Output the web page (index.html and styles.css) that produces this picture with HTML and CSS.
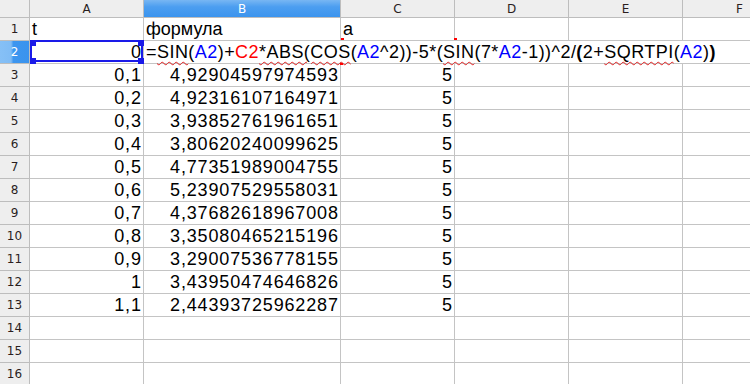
FILE: index.html
```html
<!DOCTYPE html>
<html>
<head>
<meta charset="utf-8">
<link rel="stylesheet" href="styles.css">
</head>
<body>
<div class="sheet">
  <div class="corner"></div>
  <div class="ch">A</div><div class="ch sel">B</div><div class="ch">C</div><div class="ch">D</div><div class="ch">E</div><div class="ch">F</div>

  <div class="rh">1</div><div class="c">t</div><div class="c">формула</div><div class="c">a</div><div class="c"></div><div class="c"></div><div class="c"></div>

  <div class="rh rsel">2</div>
  <div class="c r ref">0<span class="refbox"></span><span class="h tl"></span><span class="h tr"></span><span class="h bl"></span><span class="h br"></span></div>
  <div class="edit"><span class="formula">=<span class="sp">SIN</span>(<span class="rb">A2</span>)+<span class="rr">C2</span><span class="sp">*ABS(COS</span>(<span class="rb">A2</span>^2))-5*(<span class="sp">SIN</span>(7*<span class="rb">A2</span>-1))^2/<b>(</b>2+<span class="sp">SQRTPI</span>(<span class="rb">A2</span>)<b>)</b></span><span class="mk m1"></span><span class="mk m2"></span><span class="mk m3"></span></div>

  <div class="rh">3</div><div class="c r">0,1</div><div class="c r">4,92904597974593</div><div class="c r">5</div><div class="c"></div><div class="c"></div><div class="c"></div>
  <div class="rh">4</div><div class="c r">0,2</div><div class="c r">4,92316107164971</div><div class="c r">5</div><div class="c"></div><div class="c"></div><div class="c"></div>
  <div class="rh">5</div><div class="c r">0,3</div><div class="c r">3,93852761961651</div><div class="c r">5</div><div class="c"></div><div class="c"></div><div class="c"></div>
  <div class="rh">6</div><div class="c r">0,4</div><div class="c r">3,80620240099625</div><div class="c r">5</div><div class="c"></div><div class="c"></div><div class="c"></div>
  <div class="rh">7</div><div class="c r">0,5</div><div class="c r">4,77351989004755</div><div class="c r">5</div><div class="c"></div><div class="c"></div><div class="c"></div>
  <div class="rh">8</div><div class="c r">0,6</div><div class="c r">5,23907529558031</div><div class="c r">5</div><div class="c"></div><div class="c"></div><div class="c"></div>
  <div class="rh">9</div><div class="c r">0,7</div><div class="c r">4,37682618967008</div><div class="c r">5</div><div class="c"></div><div class="c"></div><div class="c"></div>
  <div class="rh">10</div><div class="c r">0,8</div><div class="c r">3,35080465215196</div><div class="c r">5</div><div class="c"></div><div class="c"></div><div class="c"></div>
  <div class="rh">11</div><div class="c r">0,9</div><div class="c r">3,29007536778155</div><div class="c r">5</div><div class="c"></div><div class="c"></div><div class="c"></div>
  <div class="rh">12</div><div class="c r">1</div><div class="c r">3,43950474646826</div><div class="c r">5</div><div class="c"></div><div class="c"></div><div class="c"></div>
  <div class="rh">13</div><div class="c r">1,1</div><div class="c r">2,44393725962287</div><div class="c r">5</div><div class="c"></div><div class="c"></div><div class="c"></div>
  <div class="rh">14</div><div class="c"></div><div class="c"></div><div class="c"></div><div class="c"></div><div class="c"></div><div class="c"></div>
  <div class="rh">15</div><div class="c"></div><div class="c"></div><div class="c"></div><div class="c"></div><div class="c"></div><div class="c"></div>
  <div class="rh">16</div><div class="c"></div><div class="c"></div><div class="c"></div><div class="c"></div><div class="c"></div><div class="c"></div>
</div>
</body>
</html>
```
FILE: styles.css
```css
html, body {
  margin: 0;
  padding: 0;
  overflow: hidden;
  background: #ffffff;
}

.sheet {
  display: grid;
  grid-template-columns: 30px 114px 197px repeat(4, 114px);
  grid-template-rows: 18px repeat(16, 23px);
  width: 797px;
  font-family: "Liberation Sans", Arial, sans-serif;
}

.corner, .ch, .rh {
  box-sizing: border-box;
  background: #eeeeee;
  border-right: 1px solid #bdbdbd;
  border-bottom: 1px solid #bdbdbd;
  font-family: "DejaVu Sans", sans-serif;
  font-size: 12px;
  color: #2a1e1e;
  display: flex;
  align-items: center;
  justify-content: center;
}

.ch.sel {
  background: linear-gradient(to bottom, #78b6f3 0%, #4c9ef0 40%, #3b94ee 100%);
  color: #ffffff;
}

.rh.rsel {
  background: linear-gradient(to right, #86c0f6 0%, #80bcf5 38%, #3d96ef 46%, #3a93ee 100%);
  color: #ffffff;
}

.c {
  box-sizing: border-box;
  border-right: 1px solid #c4c4c4;
  border-bottom: 1px solid #c4c4c4;
  font-size: 18px;
  line-height: 22px;
  padding: 0 2px;
  white-space: nowrap;
  color: #000000;
}

.r {
  text-align: right;
  letter-spacing: 0.85px;
  padding-right: 1.2px;
}

.ref {
  position: relative;
}

.refbox {
  position: absolute;
  top: -1px;
  left: 0;
  width: 113px;
  height: 22px;
  box-sizing: border-box;
  border: 2px solid #1a1ae8;
}

.h {
  position: absolute;
  width: 6px;
  height: 6px;
  background: #1a1ae8;
}
.h.tl { top: -1px; left: 0; }
.h.tr { top: -1px; left: 108px; }
.h.bl { top: 17px; left: 0; }
.h.br { top: 17px; left: 108px; }

.edit {
  grid-column: 3 / 8;
  position: relative;
  z-index: 1;
  box-sizing: border-box;
  background: #ffffff;
  border-bottom: 1px solid #c4c4c4;
  font-size: 18px;
  line-height: 22px;
  padding-left: 2px;
  white-space: nowrap;
  color: #000000;
}

.formula {
  letter-spacing: 0.45px;
}

.formula b {
  font-weight: bold;
}

.rb { color: #0000ff; }
.rr { color: #ff0000; }

.sp {
  text-decoration: underline wavy #e02020;
  text-decoration-thickness: 1px;
  text-underline-offset: 3px;
}

.mk {
  position: absolute;
  background: #ff0000;
  width: 3px;
  height: 2px;
}
.m1 { top: -3px; left: 197px; }
.m2 { top: -3px; left: 310px; }
.m3 { top: 22px; left: 196px; }
```
